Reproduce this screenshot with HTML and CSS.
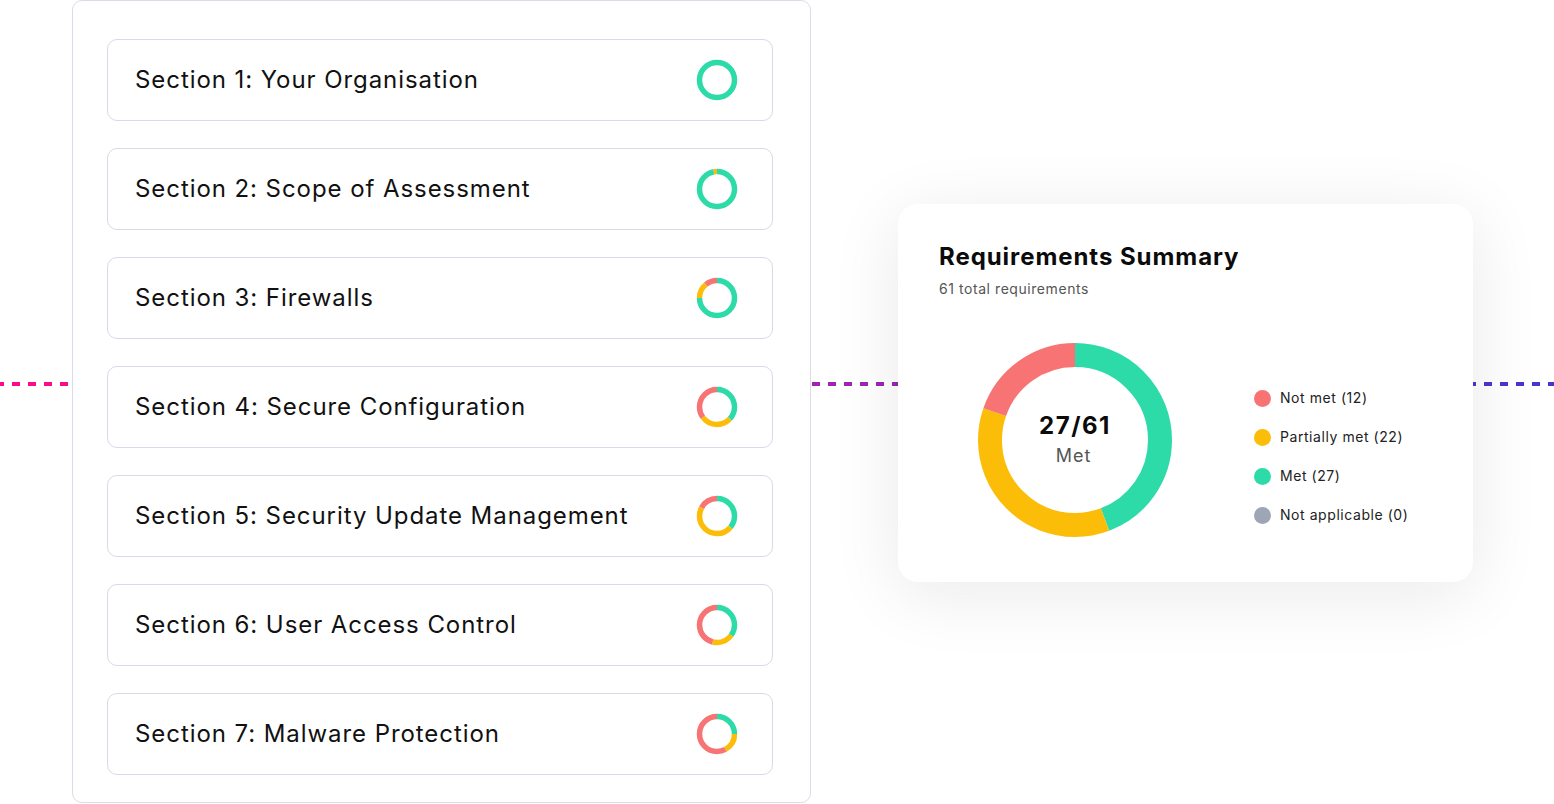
FILE: index.html
```html
<!DOCTYPE html>
<html lang="en">
<head>
<meta charset="utf-8">
<title>Requirements</title>
<link rel="stylesheet" href="styles.css">
</head>
<body>
<div class="stage">
  <div class="dash-line"></div>
  <div class="layout">
    <section class="panel">
      <div class="item"><span class="item-title">Section 1: Your Organisation</span>
        <svg class="ring" viewBox="0 0 42 42"><circle cx="21" cy="21" r="17.5" pathLength="100" class="seg g" stroke-dasharray="100 0" stroke-dashoffset="0"/></svg></div>
      <div class="item"><span class="item-title">Section 2: Scope of Assessment</span>
        <svg class="ring" viewBox="0 0 42 42"><circle cx="21" cy="21" r="17.5" pathLength="100" class="seg g" stroke-dasharray="97 3"/><circle cx="21" cy="21" r="17.5" pathLength="100" class="seg y" stroke-dasharray="3 97" stroke-dashoffset="-97"/></svg></div>
      <div class="item"><span class="item-title">Section 3: Firewalls</span>
        <svg class="ring" viewBox="0 0 42 42"><circle cx="21" cy="21" r="17.5" pathLength="100" class="seg g" stroke-dasharray="75 25"/><circle cx="21" cy="21" r="17.5" pathLength="100" class="seg y" stroke-dasharray="14 86" stroke-dashoffset="-75"/><circle cx="21" cy="21" r="17.5" pathLength="100" class="seg r" stroke-dasharray="11 89" stroke-dashoffset="-89"/></svg></div>
      <div class="item"><span class="item-title">Section 4: Secure Configuration</span>
        <svg class="ring" viewBox="0 0 42 42"><circle cx="21" cy="21" r="17.5" pathLength="100" class="seg g" stroke-dasharray="37 63"/><circle cx="21" cy="21" r="17.5" pathLength="100" class="seg y" stroke-dasharray="28 72" stroke-dashoffset="-37"/><circle cx="21" cy="21" r="17.5" pathLength="100" class="seg r" stroke-dasharray="35 65" stroke-dashoffset="-65"/></svg></div>
      <div class="item"><span class="item-title">Section 5: Security Update Management</span>
        <svg class="ring" viewBox="0 0 42 42"><circle cx="21" cy="21" r="17.5" pathLength="100" class="seg g" stroke-dasharray="36 64"/><circle cx="21" cy="21" r="17.5" pathLength="100" class="seg y" stroke-dasharray="47 53" stroke-dashoffset="-36"/><circle cx="21" cy="21" r="17.5" pathLength="100" class="seg r" stroke-dasharray="17 83" stroke-dashoffset="-83"/></svg></div>
      <div class="item"><span class="item-title">Section 6: User Access Control</span>
        <svg class="ring" viewBox="0 0 42 42"><circle cx="21" cy="21" r="17.5" pathLength="100" class="seg g" stroke-dasharray="35 65"/><circle cx="21" cy="21" r="17.5" pathLength="100" class="seg y" stroke-dasharray="19 81" stroke-dashoffset="-35"/><circle cx="21" cy="21" r="17.5" pathLength="100" class="seg r" stroke-dasharray="46 54" stroke-dashoffset="-54"/></svg></div>
      <div class="item"><span class="item-title">Section 7: Malware Protection</span>
        <svg class="ring" viewBox="0 0 42 42"><circle cx="21" cy="21" r="17.5" pathLength="100" class="seg g" stroke-dasharray="25 75"/><circle cx="21" cy="21" r="17.5" pathLength="100" class="seg y" stroke-dasharray="17 83" stroke-dashoffset="-25"/><circle cx="21" cy="21" r="17.5" pathLength="100" class="seg r" stroke-dasharray="58 42" stroke-dashoffset="-42"/></svg></div>
    </section>

    <section class="card">
      <h2 class="card-title">Requirements Summary</h2>
      <p class="card-sub">61 total requirements</p>
      <div class="card-body">
        <div class="donut">
          <svg class="donut-svg" viewBox="0 0 194 194">
            <circle cx="97" cy="97" r="85" pathLength="61" class="big g" stroke-dasharray="27 34"/>
            <circle cx="97" cy="97" r="85" pathLength="61" class="big y" stroke-dasharray="22 39" stroke-dashoffset="-27"/>
            <circle cx="97" cy="97" r="85" pathLength="61" class="big r" stroke-dasharray="12 49" stroke-dashoffset="-49"/>
          </svg>
          <div class="donut-center">
            <span class="donut-value">27/61</span>
            <span class="donut-label">Met</span>
          </div>
        </div>
        <ul class="legend">
          <li class="legend-row"><span class="dot dot-red"></span>Not met (12)</li>
          <li class="legend-row"><span class="dot dot-yellow"></span>Partially met (22)</li>
          <li class="legend-row"><span class="dot dot-green"></span>Met (27)</li>
          <li class="legend-row"><span class="dot dot-gray"></span>Not applicable (0)</li>
        </ul>
      </div>
    </section>
  </div>
</div>
</body>
</html>
```

FILE: styles.css
```css
* { box-sizing: border-box; }
html, body { margin: 0; padding: 0; background: #fff; }
body {
  font-family: Inter, "Noto Sans", "Liberation Sans", sans-serif;
  color: #111;
  width: 1554px;
  height: 804px;
  overflow: hidden;
  letter-spacing: 0.035em;
}
.stage { position: relative; width: 1554px; height: 804px; }

.dash-line {
  position: absolute;
  left: 0;
  top: 382px;
  width: 1554px;
  height: 4px;
  background: linear-gradient(90deg, #ff0a8c 0%, #9c27b0 55%, #4338ca 100%);
  -webkit-mask-image: repeating-linear-gradient(90deg, #000 0 8px, transparent 8px 16px);
  mask-image: repeating-linear-gradient(90deg, #000 0 8px, transparent 8px 16px);
  -webkit-mask-position: -4px 0;
  mask-position: -4px 0;
}

.layout {
  position: relative;
  display: flex;
  align-items: flex-start;
  padding-left: 72px;
  gap: 87px;
}

.panel {
  width: 739px;
  height: 803px;
  background: #fff;
  border: 1px solid #dcdce9;
  border-radius: 10px;
  padding: 38px 37px 0 34px;
  display: flex;
  flex-direction: column;
  gap: 27px;
}

.item {
  height: 82px;
  flex: none;
  border: 1px solid #d9d9e8;
  border-radius: 10px;
  display: flex;
  align-items: center;
  justify-content: space-between;
  padding: 0 34px 0 27px;
  background: #fff;
}
.item-title {
  font-size: 24px;
  font-weight: 400;
  color: #111;
  line-height: 30px;
  margin-top: -1px;
  letter-spacing: 0.93px;
}
.ring { width: 42px; height: 42px; transform: rotate(-90deg); }
.seg { fill: none; stroke-width: 5.5; }
.g { stroke: #2ddba9; }
.y { stroke: #fbbd08; }
.r { stroke: #f87373; }

.card {
  margin-top: 204px;
  width: 575px;
  height: 378px;
  background: #fff;
  border-radius: 20px;
  box-shadow: 0 12px 70px rgba(20, 20, 40, 0.09);
  padding: 37px 40px 0 41px;
}
.card-title {
  margin: 0;
  font-size: 24px;
  line-height: 32px;
  font-weight: 700;
  color: #0b0b0b;
  letter-spacing: 0.94px;
}
.card-sub {
  margin: 6px 0 0;
  font-size: 14px;
  line-height: 20px;
  color: #555;
}
.card-body {
  display: flex;
  align-items: flex-start;
  margin-top: 44px;
  padding-left: 39px;
  gap: 82px;
}
.donut { position: relative; width: 194px; height: 194px; }
.donut-svg { width: 194px; height: 194px; transform: rotate(-90deg); }
.big { fill: none; stroke-width: 24; }
.donut-center {
  position: absolute;
  inset: 0;
  display: flex;
  flex-direction: column;
  align-items: center;
  justify-content: center;
  padding-bottom: 2px;
}
.donut-value { font-size: 24px; font-weight: 700; line-height: 30px; color: #0b0b0b; letter-spacing: 1.5px; }
.donut-label { font-size: 18px; line-height: 24px; color: #555; letter-spacing: 1px; margin-top: 3px; margin-right: 3px; }

.legend {
  list-style: none;
  margin: 45px 0 0;
  padding: 0;
  display: flex;
  flex-direction: column;
  gap: 19px;
}
.legend-row {
  display: flex;
  align-items: center;
  gap: 9px;
  font-size: 14px;
  line-height: 20px;
  color: #222;
}
.dot { width: 17px; height: 17px; border-radius: 50%; display: inline-block; }
.dot-red { background: #f87373; }
.dot-yellow { background: #fbbd08; }
.dot-green { background: #2ddba9; }
.dot-gray { background: #9ea6b6; }
```
